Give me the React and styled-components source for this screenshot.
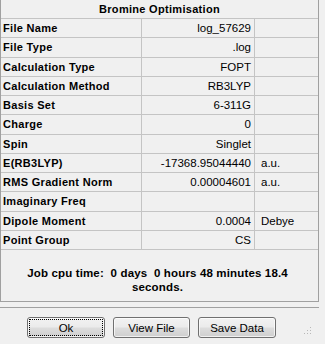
import React from "react";
import styled, { createGlobalStyle } from "styled-components";

const Global = createGlobalStyle`
  html, body { margin: 0; padding: 0; background: #f0f0f0; }
  body { font-family: "Liberation Sans", Arial, sans-serif; }
`;

const Window = styled.div`
  width: 325px;
  height: 344px;
  background: #f0f0f0;
  position: relative;
  overflow: hidden;
`;

const Panel = styled.div`
  width: 319px;
  box-sizing: border-box;
  border: 1px solid #a0a0a0;
  border-top: none;
  background: #f0f0f0;
`;

const Header = styled.div`
  height: 19px;
  box-sizing: border-box;
  border-bottom: 1px solid #c4c4c4;
  display: flex;
  align-items: center;
  justify-content: center;
  font-size: 11px;
  font-weight: bold;
  letter-spacing: 0.3px;
  color: #000;
`;

const Row = styled.div`
  display: grid;
  grid-template-columns: 141px 113px 1fr;
  height: 19.25px;
  box-sizing: border-box;
  border-bottom: 1px solid #c4c4c4;
`;

const Cell = styled.div`
  display: flex;
  align-items: center;
  box-sizing: border-box;
  font-size: ${(p) => (p.$bold ? "11px" : "11.5px")};
  color: #000;
  white-space: nowrap;
  overflow: hidden;
  border-right: ${(p) => (p.$last ? "none" : "1px solid #c4c4c4")};
  justify-content: ${(p) => (p.$align === "right" ? "flex-end" : "flex-start")};
  padding: ${(p) =>
    p.$align === "right" ? "0 3px 0 0" : p.$unit ? "0 0 0 6px" : "0 0 0 2px"};
  font-weight: ${(p) => (p.$bold ? "bold" : "normal")};
  letter-spacing: ${(p) => (p.$bold ? "0.3px" : "0")};
`;

const JobTime = styled.div`
  height: 51px;
  box-sizing: border-box;
  padding-top: 17px;
  text-align: center;
  font-size: 11.5px;
  font-weight: bold;
  letter-spacing: 0.15px;
  line-height: 13.5px;
  white-space: pre;
  color: #000;
  padding-right: 4px;
`;

const Separator = styled.div`
  width: 319px;
  height: 1px;
  background: #a0a0a0;
  margin-top: 5px;
`;

const ButtonBar = styled.div`
  display: flex;
  gap: 8px;
  padding: 9px 0 0 27px;
`;

const Button = styled.button`
  width: ${(p) => p.$w || 77}px;
  height: 21px;
  box-sizing: border-box;
  border: 1px solid #707070;
  border-radius: 3px;
  background: linear-gradient(to bottom, #f2f2f2 0%, #ebebeb 48%, #dddddd 52%, #cfcfcf 100%);
  font-family: "Liberation Sans", Arial, sans-serif;
  font-size: 11.5px;
  color: #000;
  padding: 0;
  margin: 0;
  position: relative;
  outline: ${(p) => (p.$focus ? "1px dotted #000" : "none")};
  outline-offset: -3px;
  box-shadow: inset 0 0 0 1px rgba(255, 255, 255, 0.7);
`;

const Grip = styled.svg`
  position: absolute;
  right: 13px;
  bottom: 9px;
`;

const rows = [
  ["File Name", "log_57629", ""],
  ["File Type", ".log", ""],
  ["Calculation Type", "FOPT", ""],
  ["Calculation Method", "RB3LYP", ""],
  ["Basis Set", "6-311G", ""],
  ["Charge", "0", ""],
  ["Spin", "Singlet", ""],
  ["E(RB3LYP)", "-17368.95044440", "a.u."],
  ["RMS Gradient Norm", "0.00004601", "a.u."],
  ["Imaginary Freq", "", ""],
  ["Dipole Moment", "0.0004", "Debye"],
  ["Point Group", "CS", ""],
];

export default function App() {
  return (
    <Window>
      <Global />
      <Panel>
        <Header>Bromine Optimisation</Header>
        {rows.map(([label, value, unit]) => (
          <Row key={label}>
            <Cell $bold>{label}</Cell>
            <Cell $align="right">{value}</Cell>
            <Cell $unit $last>{unit}</Cell>
          </Row>
        ))}
        <JobTime>{"Job cpu time:  0 days  0 hours 48 minutes 18.4\nseconds."}</JobTime>
      </Panel>
      <Separator />
      <ButtonBar>
        <Button $w={78} $focus>Ok</Button>
        <Button $w={77}>View File</Button>
        <Button $w={78}>Save Data</Button>
      </ButtonBar>
      <Grip width="8" height="8" viewBox="0 0 8 8">
        <g fill="#b8b8b8">
          <rect x="6" y="0" width="1" height="1" />
          <rect x="3" y="3" width="1" height="1" />
          <rect x="6" y="3" width="1" height="1" />
          <rect x="0" y="6" width="1" height="1" />
          <rect x="3" y="6" width="1" height="1" />
          <rect x="6" y="6" width="1" height="1" />
        </g>
      </Grip>
    </Window>
  );
}
